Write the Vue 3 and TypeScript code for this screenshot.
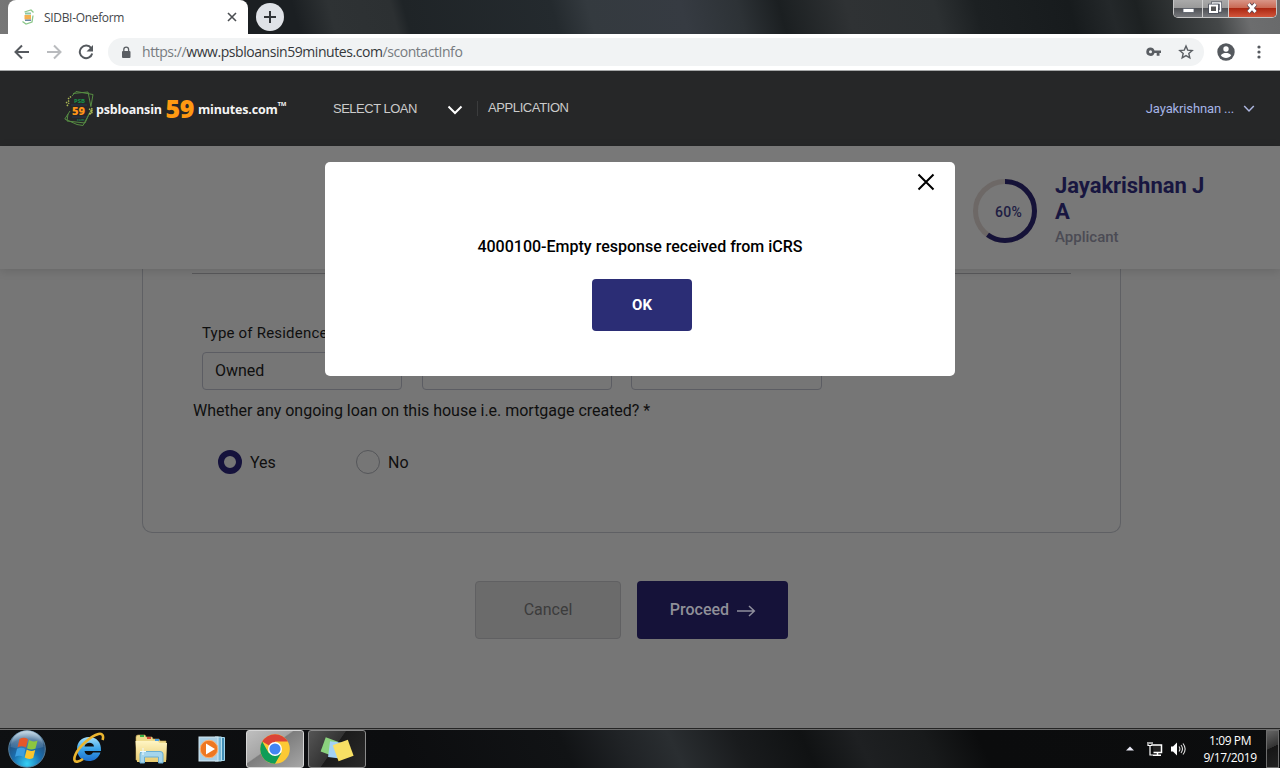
<script setup lang="ts">
import { ref } from 'vue'

const applicant = ref({ name: 'Jayakrishnan J A', role: 'Applicant', progress: 60 })
const residence = ref('Owned')
const ongoingLoan = ref<'Yes' | 'No'>('Yes')
const options: Array<'Yes' | 'No'> = ['Yes', 'No']
const modalOpen = ref(true)
const message = '4000100-Empty response received from iCRS'
const circumference = 2 * Math.PI * 29.5
</script>

<template>
  <div class="screen">
    <header class="titlebar">
      <div class="tab">
        <svg class="favicon" width="14" height="16" viewBox="0 0 14 16">
          <path d="M3.500 3 10 1 12.500 3.500M12 6.500 11 13 5 15 1.500 12.500" fill="none" stroke="#8bc78a" stroke-width="1.300" />
          <rect x="4" y="3.500" width="6" height="2" fill="#8cc7a5" />
          <rect x="3.500" y="6" width="6.500" height="4.500" fill="#f4b04f" />
          <rect x="4" y="10.500" width="6" height="1.500" fill="#6a87a3" />
        </svg>
        <span class="tab-title">SIDBI-Oneform</span>
        <svg class="tab-close" width="10" height="10" viewBox="0 0 10 10"><path d="M1 1l8 8M9 1L1 9" stroke="#4b4e52" stroke-width="1.600" /></svg>
      </div>
      <button class="newtab" aria-label="New tab">
        <svg width="28" height="28" viewBox="0 0 28 28"><path d="M14 8v12M8 14h12" stroke="#303438" stroke-width="2" /></svg>
      </button>
      <div class="winbtns">
        <span class="wb min"><svg width="29" height="17" viewBox="0 0 29 17"><rect x="9" y="8.500" width="11" height="4" fill="#fff" stroke="#555b66" stroke-width=".8" /></svg></span>
        <span class="wb max"><svg width="26" height="17" viewBox="0 0 26 17"><path d="M9.500 4V3h8v8h-2" fill="none" stroke="#4b505c" stroke-width="3" /><path d="M9.500 4V3h8v8h-2" fill="none" stroke="#fff" stroke-width="1.500" /><rect x="7" y="5.500" width="7" height="6.500" fill="#555" stroke="#454b58" stroke-width="3.500" /><rect x="7" y="5.500" width="7" height="6.500" fill="#555" stroke="#fff" stroke-width="2" /></svg></span>
        <span class="wb close"><svg width="47" height="17" viewBox="0 0 47 17"><path d="M19.500 4l7 8M26.500 4l-7 8" stroke="#5c4650" stroke-width="4.500" /><path d="M19.500 4l7 8M26.500 4l-7 8" stroke="#fff" stroke-width="2.800" /></svg></span>
      </div>
    </header>

    <div class="toolbar">
      <svg class="ico back" width="16" height="16" viewBox="0 0 16 16"><path d="M15 8H2M8 1.500 1.500 8 8 14.500" fill="none" stroke="#55595e" stroke-width="2" /></svg>
      <svg class="ico fwd" width="16" height="16" viewBox="0 0 16 16"><path d="M1 8h13M8 1.500 14.500 8 8 14.500" fill="none" stroke="#b9bbbe" stroke-width="2" /></svg>
      <svg class="ico reload" width="16" height="16" viewBox="0 0 16 16"><path d="M13.200 4.200A6.300 6.300 0 1 0 14.200 9.500" fill="none" stroke="#55595e" stroke-width="2" /><path d="M15 1v6.500H8.500z" fill="#55595e" /></svg>
      <div class="omnibox">
        <svg class="lock" width="10" height="13" viewBox="0 0 10 13"><rect x="1" y="5" width="8.500" height="7" rx="1" fill="#5a5e63" /><path d="M2.800 5V3.500a2.400 2.400 0 0 1 4.800 0V5" fill="none" stroke="#5a5e63" stroke-width="1.300" /></svg>
        <span class="url"><i>https://</i><b>www.psbloansin59minutes.com</b><i>/scontactInfo</i></span>
        <svg class="key" width="16" height="10" viewBox="0 0 16 10"><path fill-rule="evenodd" d="M4.500.5a4.200 4.200 0 0 1 4 3H15V6h-1.500v2.800h-2.800V6H8.500a4.200 4.200 0 1 1-4-5.500zm0 2.700a1.500 1.500 0 1 0 0 3 1.500 1.500 0 0 0 0-3z" fill="#5a5e63" /></svg>
        <svg class="star" width="16" height="16" viewBox="0 0 16 16"><path d="M8 2l1.700 4.100 4.500.4-3.400 3 1 4.400L8 11.600l-3.800 2.300 1-4.400-3.400-3 4.500-.4z" fill="none" stroke="#5a5e63" stroke-width="1.400" /></svg>
      </div>
      <svg class="person" width="18" height="18" viewBox="0 0 18 18"><circle cx="9" cy="9" r="8.700" fill="#55595e" /><circle cx="9" cy="6" r="2.700" fill="#fff" /><path d="M3.800 12.200C5 10.300 7 9.900 9 9.900s4 .4 5.200 2.300C13 14 11 15 9 15s-4-1-5.200-2.800z" fill="#fff" /></svg>
      <svg class="dots" width="4" height="14" viewBox="0 0 4 14"><g fill="#55595e"><circle cx="2" cy="2" r="1.600" /><circle cx="2" cy="7" r="1.600" /><circle cx="2" cy="12" r="1.600" /></g></svg>
    </div>

    <nav class="sitenav">
      <div class="logo">
        <svg width="31" height="38" viewBox="0 0 31 38">
          <g fill="none" stroke="#568b43" stroke-width="1">
            <path d="M8 6 12 1.500 29 4.500 27 16" />
            <path d="M9 3.500 24 2 27 17" />
            <path d="M6 21 .8 29 13 34.500 19 35.500 25 24" />
            <path d="M4 24 3 31 21 33 27 20" />
          </g>
          <path d="M4 9 7 6.500M2 13l4-3M3 16l2-3M25 19l4 2M25 24l4-2M28 18l-2 7" stroke="#a9b653" stroke-width="1.500" stroke-dasharray="1.500 1" />
          <path d="M7 15h16M8 27h15" stroke="#26364f" />
          <text x="10" y="12.500" class="lg-psb" textLength="11" lengthAdjust="spacingAndGlyphs">PSB</text>
          <text x="8" y="25" class="lg-59" textLength="13" lengthAdjust="spacingAndGlyphs">59</text>
          <text x="13" y="31" class="lg-com">com</text>
        </svg>
        <span class="lg-a">psbloansin</span><span class="lg-b">59</span><span class="lg-c">minutes.com</span><sup class="lg-tm">TM</sup>
      </div>
      <a class="nav-select">SELECT LOAN</a>
      <svg class="nav-chev" width="16" height="10" viewBox="0 0 16 10"><path d="M1.500 1.500 8 8l6.500-6.500" fill="none" stroke="#fff" stroke-width="2" /></svg>
      <span class="nav-sep"></span>
      <a class="nav-app">APPLICATION</a>
      <div class="nav-user">
        <span>Jayakrishnan ...</span>
        <svg width="12" height="8" viewBox="0 0 12 8"><path d="M1.200 1 6 6l4.800-5" fill="none" stroke="#aeb7e0" stroke-width="1.500" /></svg>
      </div>
    </nav>

    <main class="page">
      <section class="band">
        <div class="ring">
          <svg width="64" height="64" viewBox="0 0 64 64">
            <circle cx="32" cy="32" r="29.500" fill="none" stroke="#6d6866" stroke-width="5" />
            <circle cx="32" cy="32" r="29.500" fill="none" stroke="#151238" stroke-width="5" transform="rotate(-90 32 32)" :stroke-dasharray="`${circumference * applicant.progress / 100} ${circumference}`" />
          </svg>
          <span class="pct">{{ applicant.progress }}%</span>
        </div>
        <div class="who">
          <h2>{{ applicant.name }}</h2>
          <p>{{ applicant.role }}</p>
        </div>
      </section>

      <section class="card">
        <div class="rule"></div>
        <label class="lbl">Type of Residence *</label>
        <div class="fields">
          <div class="field f1">{{ residence }}</div>
          <div class="field f2"></div>
          <div class="field f3"></div>
        </div>
        <p class="question">Whether any ongoing loan on this house i.e. mortgage created? *</p>
        <div class="radios">
          <label v-for="o in options" :key="o" class="radio" @click="ongoingLoan = o">
            <span class="dot" :class="{ on: ongoingLoan === o }"></span>{{ o }}
          </label>
        </div>
      </section>

      <div class="actions">
        <button class="btn cancel">Cancel</button>
        <button class="btn proceed">
          <span>Proceed</span>
          <svg width="20" height="12" viewBox="0 0 20 12"><path d="M1 6h17M13 1l5.300 5L13 11" fill="none" stroke="#8f8f9c" stroke-width="1.500" /></svg>
        </button>
      </div>
    </main>

    <div v-if="modalOpen" class="modal" role="dialog">
      <button class="modal-x" aria-label="Close" @click="modalOpen = false">
        <svg width="18" height="18" viewBox="0 0 18 18"><path d="M1.500 1.500l15 15M16.500 1.500l-15 15" stroke="#000" stroke-width="2" /></svg>
      </button>
      <p class="modal-msg">{{ message }}</p>
      <button class="modal-ok" @click="modalOpen = false">OK</button>
    </div>

    <footer class="taskbar">
      <svg class="start" width="40" height="38" viewBox="0 0 40 38">
        <defs>
          <radialGradient id="orb" cx=".5" cy=".9" r=".85"><stop offset="0" stop-color="#35d0f5" /><stop offset=".45" stop-color="#1a6fb0" /><stop offset=".8" stop-color="#24517e" /><stop offset="1" stop-color="#8fb0c8" /></radialGradient>
          <linearGradient id="gloss" x2="0" y2="1"><stop stop-color="#dce8f0" stop-opacity=".7" /><stop offset="1" stop-color="#7da6c5" stop-opacity=".2" /></linearGradient>
        </defs>
        <circle cx="20" cy="19" r="18.300" fill="url(#orb)" stroke="#567e9b" stroke-width="1" />
        <path d="M3.500 17A16.500 16.500 0 0 1 36.500 17C26 20 14 20 3.500 17z" fill="url(#gloss)" />
        <path d="M12.500 9q4.500-2.500 8.500.3l-2 8.200q-4-2.500-8.500-.3z" fill="#e4582a" />
        <path d="M22 10q4 2.500 8.500.5l-2 8q-4.500 2.200-8.500-.3z" fill="#8cc63f" />
        <path d="M10 18.700q4.500-2.200 8.500.3l-2 8q-4-2.500-8.500-.3z" fill="#3b9ee0" />
        <path d="M19.700 19.500q4 2.500 8.500.5l-2 8q-4.500 2-8.500-.5z" fill="#fbc52d" />
      </svg>
      <svg class="ie" width="34" height="34" viewBox="0 0 34 34">
        <defs><linearGradient id="ieb" x2="0" y2="1"><stop stop-color="#a4e0fb" /><stop offset=".5" stop-color="#3ba5ea" /><stop offset="1" stop-color="#1c6fce" /></linearGradient></defs>
        <path fill-rule="evenodd" d="M18 6c7.500 0 12.500 5 12 14H13.500c.5 4.500 6.500 5.500 8.500 1.500h7.500C27.500 27.500 23 30 18 30 10.500 30 6 25 6 18S10.500 6 18 6zm-4.500 9.500H23c-.5-5-8.500-5-9.500 0z" fill="url(#ieb)" />
        <path d="M31.500 9C33 5 31.500 2 27.500 3 20 5 8.500 15 4.500 23.500 2.500 28 3 31.500 7 30.500c1.500-.3 3.500-1.400 5-2.500" fill="none" stroke="#eab52f" stroke-width="2.600" />
      </svg>
      <svg class="explorer" width="34" height="32" viewBox="0 0 34 32">
        <defs><linearGradient id="fld" x2="0" y2="1"><stop stop-color="#fff5c4" /><stop offset="1" stop-color="#e8cb6e" /></linearGradient></defs>
        <path d="M2 4q0-2 2-2h7l1 2h6l1 2h6l1 2h6v19H2z" fill="#eedb8d" stroke="#c2a455" stroke-width=".6" />
        <rect x="6" y="2" width="4" height="2" fill="#39b34a" /><rect x="13" y="4" width="4" height="2" fill="#d64d3a" /><rect x="21" y="6" width="4" height="2" fill="#4a9de0" />
        <path d="M1.500 8h22l2 2H33l-1 19H3z" fill="url(#fld)" />
        <path d="M6 30V21q0-2.500 3-2.500h17q3 0 3 2.500v9h-4.500v-6h-14v6z" fill="#a5d5ec" stroke="#6aaed2" />
        <path d="M9 15v7M6 18.500h6" stroke="#effaff" stroke-width="1" />
      </svg>
      <svg class="wmp" width="28" height="28" viewBox="0 0 28 28">
        <path d="M19 2.500h7.500v23H19z" fill="#418db5" stroke="#a3d4ea" /><path d="M17 2h6.500v24H17z" fill="#76b8d8" stroke="#b9e2f1" />
        <rect x="1" y="2" width="19" height="24" fill="#a9cfe5" stroke="#d4e8f2" />
        <circle cx="11" cy="14" r="8.800" fill="#ee7721" stroke="#fbb375" />
        <path d="M8 8.500 17 14l-9 5.500z" fill="#fff" />
      </svg>
      <div class="task active">
        <svg width="30" height="30" viewBox="0 0 30 30">
          <circle cx="15" cy="15" r="14.800" fill="#fcc934" />
          <path d="M15 15 2.200 7.600A14.800 14.800 0 0 1 27.800 7.600H15z" fill="#db4437" />
          <path d="M2.200 7.600 8.600 18.700 15 21.500 21.400 18.700 15 29.800A14.800 14.800 0 0 1 2.200 7.600z" fill="#0f9d58" />
          <circle cx="15" cy="15" r="7" fill="#fff" /><circle cx="15" cy="15" r="5.600" fill="#4285f4" />
        </svg>
      </div>
      <div class="task">
        <svg width="34" height="28" viewBox="0 0 34 28">
          <rect x="3" y="4" width="13" height="15" fill="#8bd27e" transform="rotate(20 9 11)" />
          <rect x="9" y="7" width="14" height="16" fill="#a3d2f4" transform="rotate(7 16 15)" />
          <rect x="15" y="7" width="16" height="17" fill="#f8e064" transform="rotate(-20 23 15)" />
        </svg>
      </div>
      <svg class="up" width="8" height="5" viewBox="0 0 8 5"><path d="M0 4.500 4 .5l4 4z" fill="#e9e9f5" /></svg>
      <svg class="net" width="16" height="16" viewBox="0 0 16 16"><path d="M5.500 4H14.500v7.500h-8" fill="#222" stroke="#fff" stroke-width="1.500" /><path d="M10.500 11v3M6 14.200h8" stroke="#fff" stroke-width="1.500" /><path d="M1 1v3.500h4V1M3 1v2M3 4.500V14h3" fill="none" stroke="#fff" stroke-width="1.200" /></svg>
      <svg class="vol" width="16" height="14" viewBox="0 0 16 14"><path d="M1 4.500h2L7 .5v13l-4-4H1z" fill="#fff" /><path d="M9 4.500q1.800 2.500 0 5M11 3q3 4 0 8M13 1.500q4.300 5.500 0 11" fill="none" stroke="#ddd" stroke-width="1.100" /></svg>
      <div class="clock"><span class="time">1:09 PM</span><span class="date">9/17/2019</span></div>
      <div class="peek"></div>
    </footer>
  </div>
</template>

<style>
body { margin: 0; overflow: hidden; }
</style>

<style scoped>
.screen { position: relative; width: 1280px; height: 768px; overflow: hidden; display: flex; flex-direction: column; font-family: Roboto, "Liberation Sans", sans-serif; background: #777; }
button { border: 0; padding: 0; font-family: inherit; background: none; }
h2, p { margin: 0; }
svg { display: block; flex: none; }

.titlebar { height: 34px; flex: none; display: flex; background: linear-gradient(75deg, #777 0, #747474 20px, #1b1f22 40px, #1b1f22 290px, #2e3234 325px, #2c3032 385px, #1f2427 397px, #242a2e 540px, #343a3f 575px, #363b42 665px, #2d3236 720px, #1b1f21 760px, #2f3234 825px, #2c3032 910px, #1c2022 950px, #171b1d 1040px, #24282a 1080px, #1d2122 1105px, #444748 1180px, #6c6d6e 1210px, #656667 1280px); }
.tab { margin-left: 8px; width: 240px; height: 34px; flex: none; background: #fff; border-radius: 8px 8px 0 0; display: flex; align-items: center; box-sizing: border-box; padding: 0 11px 0 13px; }
.tab-title { margin-left: 9px; flex: 1; font: 12px "Open Sans", "Noto Sans", sans-serif; letter-spacing: -.32px; color: #45484b; }
.newtab { width: 28px; height: 28px; margin: 3px 0 0 8px; border-radius: 50%; background: #dfe2e7; flex: none; }
.winbtns { margin-left: auto; margin-right: 3px; width: 104px; height: 18px; box-sizing: border-box; display: flex; border: 1px solid #c6c6c6; border-top: 0; border-radius: 0 0 5px 5px; overflow: hidden; box-shadow: inset 0 0 0 1px #333; }
.wb { height: 17px; background: linear-gradient(#aaa 0, #999 8px, #4d4f53 8px, #77797d); border-right: 1px solid #d0d0d0; box-sizing: border-box; overflow: hidden; }
.min { width: 29px; } .max { width: 26px; }
.close { width: 47px; border-right: 0; background: linear-gradient(#d89587 0, #c96853 8px, #a92510 8px, #d2553a); }

.toolbar { height: 37px; flex: none; background: #fff; border-bottom: 1px solid #a6a8a9; box-sizing: border-box; display: flex; align-items: center; }
.back { margin-left: 14px; } .fwd { margin-left: 16px; } .reload { margin-left: 16px; }
.omnibox { margin-left: 14px; width: 1096px; height: 28px; border-radius: 14px; background: #f1f3f4; display: flex; align-items: center; }
.lock { margin-left: 13px; }
.url { margin-left: 11px; flex: 1; font: 14px/18px "Open Sans", "Noto Sans", sans-serif; margin-top: -1px; letter-spacing: -.44px; white-space: nowrap; }
.url i { font-style: normal; color: #777b80; } .url b { font-weight: 400; color: #35383b; }
.star { margin: 0 10px 0 16px; }
.person { margin-left: 13px; } .dots { margin-left: 22px; }

.sitenav { height: 75px; flex: none; background: #262728; display: flex; align-items: center; box-sizing: border-box; font-family: "Liberation Sans", Arial, sans-serif; }
.logo { margin-left: 64px; width: 269px; flex: none; display: flex; align-items: center; font-family: "Open Sans", "Noto Sans", sans-serif; font-weight: 700; color: #f4f4f4; white-space: nowrap; }
.lg-psb { font: 700 5.500px "Open Sans", sans-serif; fill: #17964a; }
.lg-59 { font: 800 11px "Open Sans", sans-serif; fill: #ff9519; }
.lg-com { font: 700 3.500px "Open Sans", sans-serif; fill: #1c7750; }
.lg-a, .lg-c { font-size: 12.500px; line-height: 20px; margin-top: 2px; letter-spacing: -.18px; }
.lg-a { margin-left: 1px; width: 69.500px; } .lg-b { font-size: 25px; font-weight: 800; line-height: 28px; color: #ff9912; width: 32.500px; margin-top: -2px; letter-spacing: -.3px; }
.lg-tm { font-size: 6px; line-height: 8px; margin-top: -10px; letter-spacing: -.3px; }
.nav-select { width: 115px; font-size: 13px; line-height: 18px; letter-spacing: -.5px; color: #cbcbcb; }
.nav-chev { margin: 3px 0 0 -1px; }
.nav-sep { width: 1px; height: 15px; background: #3b3c3d; margin-left: 14px; }
.nav-app { margin-left: 10px; font-size: 13px; line-height: 18px; letter-spacing: -.4px; color: #cbcbcb; margin-top: -2px; }
.nav-user { margin-left: auto; margin-right: 25px; display: flex; align-items: center; gap: 9px; font: 13px Roboto, sans-serif; letter-spacing: -.13px; color: #a5b4e6; }

.page { height: 582px; flex: none; background: #767676; display: flex; flex-direction: column; }
.band { position: relative; height: 123px; flex: none; background: #787878; box-shadow: 0 2px 9px rgba(0, 0, 0, .13); display: flex; box-sizing: border-box; padding: 27px 0 0 973px; }
.ring { width: 64px; height: 64px; margin-top: 6px; position: relative; }
.pct { position: absolute; left: 22px; top: 24px; font-size: 14px; line-height: 18px; font-weight: 500; color: #201d43; letter-spacing: .3px; }
.who { margin-left: 18px; width: 165px; }
.who h2 { font-size: 22px; line-height: 26px; font-weight: 700; color: #181640; letter-spacing: -.05px; }
.who p { font-size: 15px; line-height: 20px; margin-top: 2px; font-weight: 500; color: #4b4b54; }
.card { margin-left: 142px; width: 979px; height: 264px; flex: none; box-sizing: border-box; border: 1px solid #5f6064; border-top: 0; border-radius: 0 0 10px 10px; padding: 4px 49px 0; color: #0f0f0f; }
.rule { height: 1px; background: #59595b; }
.lbl { display: block; margin: 49px 0 0 10px; font-size: 15px; line-height: 20px; letter-spacing: .2px; }
.fields { display: flex; margin: 9px 0 0 10px; }
.field { height: 38px; box-sizing: border-box; border: 1px solid #5c5d63; border-radius: 4px; padding-left: 12px; font-size: 16px; line-height: 35px; }
.f1 { width: 200px; } .f2 { width: 190px; margin-left: 20px; } .f3 { width: 191px; margin-left: 19px; }
.question { font-size: 16px; line-height: 20px; margin: 11px 0 0 1px; letter-spacing: -.02px; white-space: nowrap; }
.radios { display: flex; margin: 29px 0 0 26px; }
.radio { display: flex; align-items: center; width: 138px; height: 24px; font-size: 16px; }
.dot { width: 24px; height: 24px; box-sizing: border-box; border-radius: 50%; border: 1px solid #55565a; margin-right: 8px; }
.dot.on { border: 6px solid #15123c; }
.actions { display: flex; gap: 16px; margin: 48px 0 0 475px; }
.btn { height: 58px; border-radius: 4px; font-size: 16px; display: flex; align-items: center; justify-content: center; box-sizing: border-box; padding-bottom: 2px; }
.cancel { width: 146px; background: #6b6b6b; border: 1px solid #606062; color: #3c3c3c; }
.proceed { width: 151px; background: #151239; color: #8f8f98; gap: 7px; font-weight: 500; padding-left: 1px; }
.proceed svg { margin-top: 3px; }

.modal { position: absolute; left: 325px; top: 162px; width: 630px; height: 214px; background: #fff; border-radius: 5px; display: flex; flex-direction: column; align-items: center; }
.modal-x { align-self: flex-end; margin: 11px 20px 0 0; height: 18px; }
.modal-msg { margin-top: 46px; font-size: 16px; line-height: 20px; font-weight: 500; color: #000; white-space: nowrap; }
.modal-ok { margin: 22px 0 0 4px; width: 100px; height: 52px; border-radius: 4px; background: #2b2d75; color: #fff; font-size: 15px; font-weight: 700; }

.taskbar { height: 40px; flex: none; box-sizing: border-box; border-top: 1px solid #252525; box-shadow: inset 0 1px #6c6c6c; background: linear-gradient(65deg, #0e1012 0, #0c0d0f 370px, #111315 520px, #202326 575px, #2a2e31 620px, #191b1d 680px, #101213 740px, #1e2022 790px, #181a1b 850px, #0b0c0d 900px, #0c0d0e 1280px); display: flex; align-items: center; color: #fff; }
.start { margin-left: 7px; } .ie { margin-left: 24px; margin-top: -2px; } .explorer { margin-left: 29px; } .wmp { margin-left: 30px; }
.task { margin-left: 4px; width: 58px; height: 38px; border: 1px solid #8b8b8b; border-radius: 3px; box-sizing: border-box; display: flex; align-items: center; justify-content: center; background: linear-gradient(125deg, #555 0, #333 45%, #1b1b1b 46%, #292929); }
.active { margin-left: 20px; border-color: #d6d6d6; background: linear-gradient(145deg, #bfbfbf 0, #a5a5a5 42%, #7d7d7d 44%, #a6a6a6); }
.up { margin-left: auto; } .net { margin-left: 13px; } .vol { margin-left: 7px; margin-right: 10px; }
.clock { width: 68px; display: flex; flex-direction: column; align-items: center; font: 12px/17px "Open Sans", "Noto Sans", sans-serif; letter-spacing: -.4px; }
.clock span { white-space: nowrap; }
.peek { margin-left: 2px; width: 13px; height: 38px; box-sizing: border-box; border: 1px solid #6d6d6d; background: linear-gradient(155deg, #666 0, #333 45%, #161616 46%, #222); margin-right: 1px; }
</style>
